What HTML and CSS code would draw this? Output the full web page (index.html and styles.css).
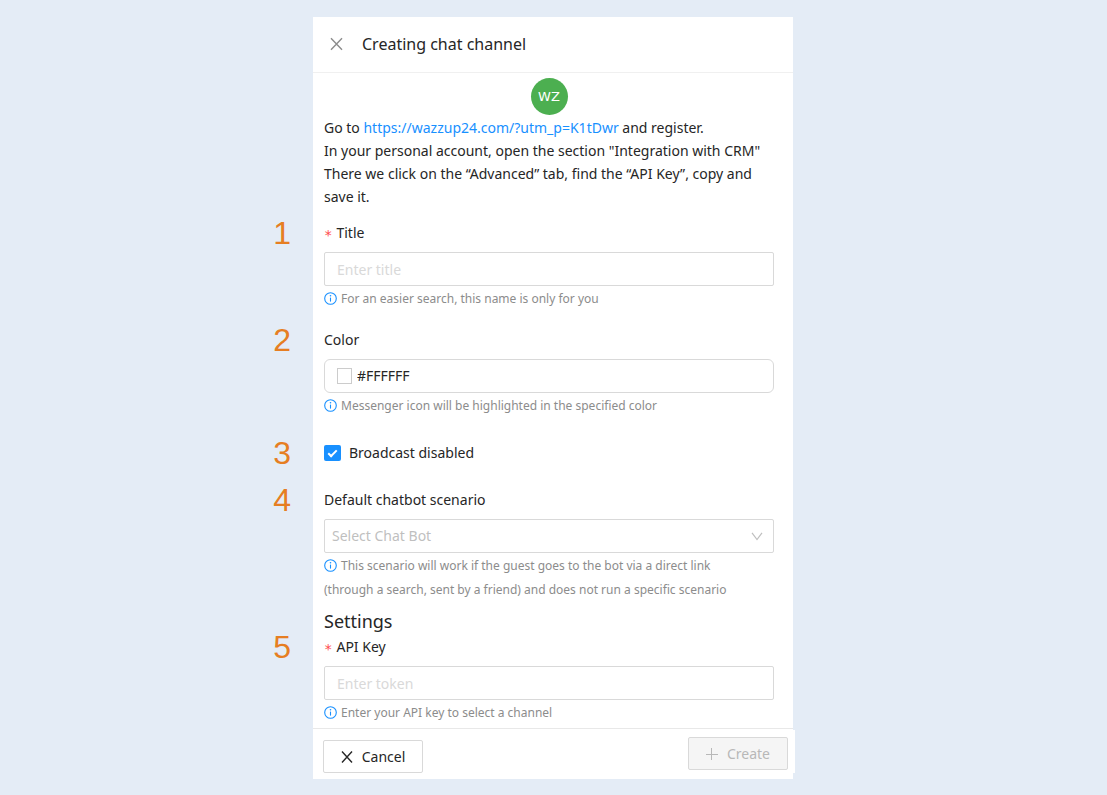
FILE: index.html
```html
<!DOCTYPE html>
<html lang="en">
<head>
<meta charset="utf-8">
<title>Creating chat channel</title>
<link rel="stylesheet" href="styles.css">
</head>
<body>
<svg class="defs" aria-hidden="true">
  <symbol id="info" viewBox="0 0 13 13">
    <circle cx="6.5" cy="6.5" r="5.8" fill="none" stroke="currentColor" stroke-width="1.1"/>
    <path d="M6.5 5.6V9.6" stroke="currentColor" stroke-width="1.1"/>
    <circle cx="6.5" cy="3.7" r=".8" fill="currentColor"/>
  </symbol>
</svg>
<form class="panel">
  <header class="header">
    <button class="close" type="button" aria-label="Close">
      <svg width="13" height="14" viewBox="0 0 13 14"><path d="M1 1.2L12 12.8M12 1.2L1 12.8" fill="none" stroke="currentColor" stroke-width="1.4"/></svg>
    </button>
    <h1 class="title">Creating chat channel</h1>
  </header>

  <main class="content">
    <div class="avatar">WZ</div>
    <p class="intro">Go to <a class="link" href="https://wazzup24.com/?utm_p=K1tDwr">https://wazzup24.com/?utm_p=K1tDwr</a> and register.<br>In your personal account, open the section "Integration with CRM"<br>There we click on the “Advanced” tab, find the “API Key”, copy and save it.</p>

    <div class="field">
      <span class="step">1</span>
      <label class="label required" for="name">Title</label>
      <input class="control" id="name" type="text" placeholder="Enter title">
      <p class="hint"><svg class="info"><use href="#info"/></svg>For an easier search, this name is only for you</p>
    </div>

    <div class="field">
      <span class="step">2</span>
      <label class="label" for="color">Color</label>
      <div class="control color">
        <span class="swatch"></span>
        <input class="color-value" id="color" type="text" value="#FFFFFF">
      </div>
      <p class="hint"><svg class="info"><use href="#info"/></svg>Messenger icon will be highlighted in the specified color</p>
    </div>

    <div class="field toggle">
      <span class="step">3</span>
      <label class="check-label"><input class="check" type="checkbox" checked>Broadcast disabled</label>
    </div>

    <div class="field">
      <span class="step">4</span>
      <label class="label" for="bot">Default chatbot scenario</label>
      <div class="select-wrap">
        <select class="control select" id="bot"><option>Select Chat Bot</option></select>
        <svg class="chevron" width="12" height="9" viewBox="0 0 12 9"><path d="M1 .8L6 7.5L11 .8" fill="none" stroke="currentColor" stroke-width="1.2"/></svg>
      </div>
      <p class="hint"><svg class="info"><use href="#info"/></svg>This scenario will work if the guest goes to the bot via a direct link<br>(through a search, sent by a friend) and does not run a specific scenario</p>
    </div>

    <h2 class="section">Settings</h2>
    <div class="field last">
      <span class="step">5</span>
      <label class="label required" for="key">API Key</label>
      <input class="control" id="key" type="text" placeholder="Enter token">
      <p class="hint"><svg class="info"><use href="#info"/></svg>Enter your API key to select a channel</p>
    </div>
  </main>

  <footer class="footer">
    <button class="button cancel" type="button">
      <svg width="12" height="12" viewBox="0 0 12 12"><path d="M1 .6L11 11.4M11 .6L1 11.4" fill="none" stroke="currentColor" stroke-width="1.4"/></svg>Cancel
    </button>
    <button class="button create" type="submit" disabled>
      <svg width="12" height="12" viewBox="0 0 12 12"><path d="M0 6.5H12M5.5 0V12" fill="none" stroke="currentColor" stroke-width="1"/></svg>Create
    </button>
  </footer>
</form>
</body>
</html>
```
FILE: styles.css
```css
* { box-sizing: border-box; }

body {
  margin: 0;
  padding: 17px 17px 16px 16px;
  background: #e4ecf6;
  color: #262626;
  font: 14px/24px "Noto Sans", "Open Sans", sans-serif;
}

h1, h2, p { margin: 0; font-weight: 400; }

.defs { position: absolute; width: 0; height: 0; }

.panel {
  position: relative;
  max-width: 480px;
  margin: 0 auto;
  background: #fff;
}

.header {
  display: flex;
  align-items: center;
  gap: 19px;
  height: 56px;
  padding: 0 17px 2px;
  border-bottom: 1px solid #f0f0f0;
}

.close {
  display: flex;
  padding: 0;
  border: 0;
  background: none;
  color: #8c8c8c;
}

.title { font-size: 16px; }

.content { padding: 5px 19px 3px 11px; }

.avatar {
  display: grid;
  place-items: center;
  width: 37px;
  height: 37px;
  margin: 0 auto 1px;
  border-radius: 50%;
  background: #4caf50;
  color: #fff;
  font: 13px/20px "DejaVu Sans", sans-serif;
}

.intro { margin-bottom: 13px; line-height: 23px; }

.link { color: #1890ff; text-decoration: none; }

.field { position: relative; margin-bottom: 17px; }

.step {
  position: absolute;
  top: -4px;
  right: 100%;
  margin-right: 33px;
  color: #e67e22;
  font: 32px/32px "Liberation Sans", Arial, sans-serif;
}

.label { display: block; height: 24px; margin-bottom: 7px; }

.required::before {
  content: "*";
  margin-right: 4px;
  color: #ff4d4f;
  font: 14px/20px "DejaVu Sans Mono", monospace;
  vertical-align: -2px;
}

.control {
  display: block;
  width: 100%;
  height: 34px;
  padding: 0 12px;
  border: 1px solid #d9d9d9;
  border-radius: 2px;
  background: #fff;
  color: inherit;
  font: inherit;
}

.control::placeholder { color: #d9d9d9; opacity: 1; }

.color { display: flex; align-items: center; gap: 5px; border-radius: 6px; }

.swatch { width: 15px; height: 16px; border: 1px solid #ccc; }

.color-value {
  flex: 1;
  min-width: 0;
  padding: 0;
  border: 0;
  background: none;
  color: inherit;
  font: inherit;
}

.hint { padding-top: 1px; color: #8c8c8c; font-size: 12px; }

.info {
  width: 13px;
  height: 13px;
  margin-right: 4px;
  color: #1890ff;
  vertical-align: -2px;
}

.toggle { margin: 23px 0; }

.check-label { display: flex; align-items: center; gap: 8px; }

.check {
  display: grid;
  place-items: center;
  width: 17px;
  height: 16px;
  margin: 0;
  appearance: none;
  border-radius: 2px;
  background: #1890ff;
}

.check:checked::before {
  content: "";
  width: 7px;
  height: 3px;
  margin-bottom: 2px;
  border: solid #fff;
  border-width: 0 0 2px 2px;
  transform: rotate(-45deg);
}

.select-wrap { position: relative; }

.select { padding: 0 7px; appearance: none; color: #bfbfbf; }

.chevron {
  position: absolute;
  top: 13px;
  right: 11px;
  color: #bfbfbf;
  pointer-events: none;
}

.section { margin: -10px 0 2px; font-size: 18px; line-height: 24px; }

.last { margin-bottom: 0; }

.footer {
  position: relative;
  display: flex;
  justify-content: space-between;
  min-height: 51px;
  padding: 8px 5px 6px 10px;
  border-top: 1px solid #e8e8e8;
}

.footer::after {
  content: "";
  position: absolute;
  top: 1px;
  bottom: 6px;
  left: 100%;
  width: 2px;
  background: #fff;
}

.button {
  display: flex;
  align-items: center;
  justify-content: center;
  gap: 9px;
  min-width: 100px;
  height: 33px;
  padding: 0 16px;
  border: 1px solid #d9d9d9;
  border-radius: 2px;
  background: #fff;
  color: #262626;
  font: inherit;
}

.cancel { align-self: flex-end; }

.create { align-self: flex-start; background: #f5f5f5; color: #b8b8b8; }
```
